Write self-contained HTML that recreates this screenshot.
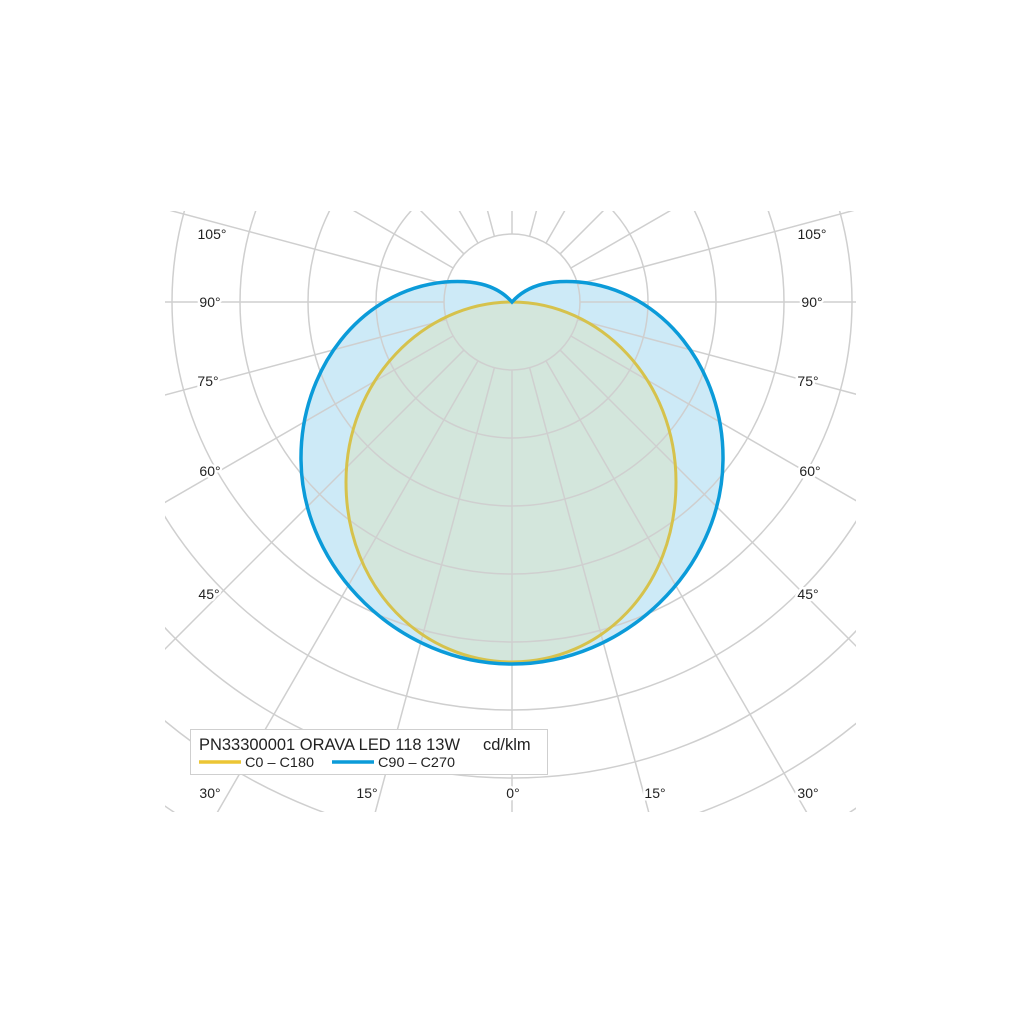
<!DOCTYPE html>
<html><head><meta charset="utf-8"><style>
html,body{margin:0;padding:0;background:#fff;width:1024px;height:1024px;overflow:hidden}
svg{display:block}
text{font-family:"Liberation Sans","DejaVu Sans",sans-serif;fill:#222}
</style></head><body>
<svg width="1024" height="1024" viewBox="0 0 1024 1024">
<defs><clipPath id="c"><rect x="165" y="211" width="691" height="601"/></clipPath></defs>
<g clip-path="url(#c)">
<path d="M512,302 C495,283 470,280 445,282 C360,290 300,370 301,460 C302,570 400,664 512,664 C624,664 722,570 723,460 C724,370 664,290 579,282 C554,280 529,283 512,302 Z" fill="#cdeaf7"/>
<path d="M512,302 C600,302 676,380 676,482 C676,590 600,662 512,662 C424,662 346,590 346,482 C346,380 424,302 512,302Z" fill="#d3e6dc"/>
<g fill="none" stroke="#cfcfcf" stroke-width="1.5">
<circle cx="512" cy="302" r="68"/><circle cx="512" cy="302" r="136"/><circle cx="512" cy="302" r="204"/><circle cx="512" cy="302" r="272"/><circle cx="512" cy="302" r="340"/><circle cx="512" cy="302" r="408"/><circle cx="512" cy="302" r="476"/><circle cx="512" cy="302" r="544"/><circle cx="512" cy="302" r="612"/>
<g id="rl">
<line x1="512" y1="370" x2="512" y2="1100"/>
</g>
<use href="#rl" transform="rotate(15 512 302)"/><use href="#rl" transform="rotate(30 512 302)"/><use href="#rl" transform="rotate(45 512 302)"/><use href="#rl" transform="rotate(60 512 302)"/><use href="#rl" transform="rotate(75 512 302)"/><use href="#rl" transform="rotate(90 512 302)"/><use href="#rl" transform="rotate(105 512 302)"/><use href="#rl" transform="rotate(120 512 302)"/><use href="#rl" transform="rotate(135 512 302)"/><use href="#rl" transform="rotate(150 512 302)"/><use href="#rl" transform="rotate(165 512 302)"/><use href="#rl" transform="rotate(180 512 302)"/>
<use href="#rl" transform="rotate(-15 512 302)"/><use href="#rl" transform="rotate(-30 512 302)"/><use href="#rl" transform="rotate(-45 512 302)"/><use href="#rl" transform="rotate(-60 512 302)"/><use href="#rl" transform="rotate(-75 512 302)"/><use href="#rl" transform="rotate(-90 512 302)"/><use href="#rl" transform="rotate(-105 512 302)"/><use href="#rl" transform="rotate(-120 512 302)"/><use href="#rl" transform="rotate(-135 512 302)"/><use href="#rl" transform="rotate(-150 512 302)"/><use href="#rl" transform="rotate(-165 512 302)"/>
</g>
<path d="M512,302 C600,302 676,380 676,482 C676,590 600,662 512,662 C424,662 346,590 346,482 C346,380 424,302 512,302Z" fill="none" stroke="#d6c24c" stroke-width="3"/>
<path d="M512,302 C495,283 470,280 445,282 C360,290 300,370 301,460 C302,570 400,664 512,664 C624,664 722,570 723,460 C724,370 664,290 579,282 C554,280 529,283 512,302 Z" fill="none" stroke="#0b9bd9" stroke-width="3.5"/>
</g>
<g font-size="14" text-anchor="middle" style="paint-order:stroke" stroke="#fff" stroke-width="5">
<text x="212" y="239">105°</text><text x="210" y="307">90°</text><text x="208" y="386">75°</text><text x="210" y="476">60°</text><text x="209" y="599">45°</text>
<text x="812" y="239">105°</text><text x="812" y="307">90°</text><text x="808" y="386">75°</text><text x="810" y="476">60°</text><text x="808" y="599">45°</text>
<text x="210" y="798">30°</text><text x="367" y="798">15°</text><text x="513" y="798">0°</text><text x="655" y="798">15°</text><text x="808" y="798">30°</text>
</g>
<rect x="190.5" y="729.5" width="357" height="45" fill="#fff" stroke="#cfcfcf"/>
<text x="199" y="750" font-size="16.5" textLength="261" lengthAdjust="spacingAndGlyphs">PN33300001 ORAVA LED 118 13W</text>
<text x="483" y="750" font-size="16.5">cd/klm</text>
<line x1="199" y1="762" x2="241" y2="762" stroke="#ecc534" stroke-width="3.5"/>
<text x="245" y="767" font-size="14" textLength="69" lengthAdjust="spacingAndGlyphs">C0 – C180</text>
<line x1="332" y1="762" x2="374" y2="762" stroke="#0b9bd9" stroke-width="3.5"/>
<text x="378" y="767" font-size="14" textLength="77" lengthAdjust="spacingAndGlyphs">C90 – C270</text>
</svg>
</body></html>
